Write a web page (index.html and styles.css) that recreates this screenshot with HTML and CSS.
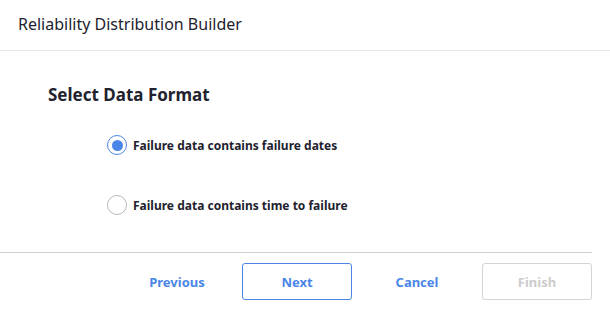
FILE: index.html
```html
<!DOCTYPE html>
<html>
<head>
<meta charset="utf-8">
<link rel="stylesheet" href="styles.css">
</head>
<body>
<div class="dialog">
  <header class="header">Reliability Distribution Builder</header>
  <main class="content">
    <h2 class="section-title">Select Data Format</h2>
    <div class="options">
      <label class="option">
        <span class="radio checked"><span class="dot"></span></span>
        <span class="option-label">Failure data contains failure dates</span>
      </label>
      <label class="option">
        <span class="radio"></span>
        <span class="option-label">Failure data contains time to failure</span>
      </label>
    </div>
  </main>
  <footer class="footer">
    <button class="btn btn-text">Previous</button>
    <button class="btn btn-outline">Next</button>
    <button class="btn btn-text">Cancel</button>
    <button class="btn btn-disabled">Finish</button>
  </footer>
</div>
</body>
</html>
```
FILE: styles.css
```css
html, body {
  margin: 0;
  padding: 0;
  background: #ffffff;
}
body {
  font-family: "Noto Sans", "Open Sans", sans-serif;
  color: #1f1f2e;
}
.dialog {
  width: 610px;
  height: 331px;
  display: flex;
  flex-direction: column;
}
.header {
  height: 51px;
  flex: none;
  box-sizing: border-box;
  border-bottom: 1px solid #e8e8e8;
  padding: 13px 0 0 18px;
  font-size: 16px;
  line-height: 22px;
  color: #22222e;
}
.content {
  flex: none;
  padding: 33px 18px 0 48px;
  height: 202px;
  box-sizing: border-box;
  border-bottom: 1px solid #cfcfcf;
  margin: 0 18px 0 0;
}
.section-title {
  margin: 0;
  font-size: 17px;
  line-height: 22px;
  font-weight: 700;
  color: #22222e;
}
.options {
  display: flex;
  flex-direction: column;
  gap: 40px;
  padding: 29px 0 0 59px;
}
.option {
  display: flex;
  align-items: center;
  gap: 6px;
  height: 20px;
}
.radio {
  width: 20px;
  height: 20px;
  box-sizing: border-box;
  border: 1px solid #b8b8b8;
  border-radius: 50%;
  display: flex;
  align-items: center;
  justify-content: center;
}
.radio.checked {
  border: 1.5px solid #4a86e8;
}
.dot {
  width: 11px;
  height: 11px;
  border-radius: 50%;
  background: #4a86e8;
}
.option-label {
  font-size: 12px;
  font-weight: 700;
  color: #22222e;
}
.footer {
  display: flex;
  justify-content: flex-end;
  gap: 10px;
  padding: 10px 18px 0 0;
}
.btn {
  width: 110px;
  height: 37px;
  box-sizing: border-box;
  font-family: inherit;
  font-size: 13px;
  font-weight: 700;
  background: #fff;
  border: 1px solid transparent;
  border-radius: 3px;
  color: #4a86e8;
  padding: 0;
}
.btn-outline {
  border-color: #4a86e8;
}
.btn-disabled {
  border-color: #d4d4d4;
  color: #cccccc;
}
```
